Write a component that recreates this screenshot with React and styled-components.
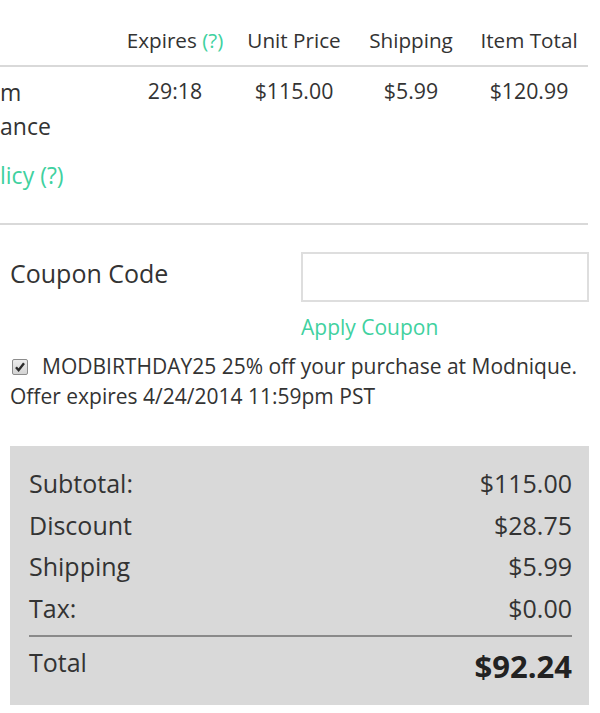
import React from "react";
import styled, { createGlobalStyle } from "styled-components";

const Global = createGlobalStyle`
  html, body { margin: 0; padding: 0; background: #fff; }
  body { font-family: "Open Sans", "Liberation Sans", sans-serif; color: #333; overflow: hidden; }
`;

const Page = styled.div`
  width: 600px;
  display: flex;
  flex-direction: column;
`;

const Cart = styled.div`
  width: 588px;
`;

const Grid = styled.div`
  display: grid;
  grid-template-columns: 120px 110px 128px 106px 130px;
  align-items: start;
`;

const HeadRow = styled(Grid)`
  padding: 27px 0 12px;
  border-bottom: 2px solid #d9d9d9;
`;

const HeadCell = styled.div`
  font-size: 20.7px;
  line-height: 26px;
  text-align: center;
  white-space: nowrap;
  color: #333;
`;

const BodyRow = styled(Grid)`
  height: 156px;
  border-bottom: 2px solid #d9d9d9;
`;

const ProductCell = styled.div`
  padding-top: 8px;
  font-size: 23px;
  line-height: 34px;
  display: flex;
  flex-direction: column;
`;

const Link = styled.span`
  color: #3fd1a0;
  margin-top: ${(p) => p.$gap || 0}px;
`;

const ValueCell = styled.div`
  padding-top: 11px;
  font-size: 21.3px;
  line-height: 26px;
  text-align: center;
  white-space: nowrap;
`;

const CouponRow = styled.div`
  display: grid;
  grid-template-columns: 291px 288px;
  padding: 27px 0 0 10px;
  align-items: start;
`;

const CouponLabel = styled.div`
  font-size: 25px;
  line-height: 42px;
  color: #333;
`;

const CouponInput = styled.input`
  box-sizing: border-box;
  width: 288px;
  height: 50px;
  border: 2px solid #dedede;
  background: #fff;
  margin: 0;
`;

const ApplyLink = styled.div`
  grid-column: 2;
  font-size: 21px;
  line-height: 30px;
  color: #3fd1a0;
  margin-top: 10px;
`;

const Offer = styled.div`
  padding: 9px 0 0 10px;
  font-size: 21px;
  line-height: 30px;
  color: #333;
  white-space: nowrap;
`;

const Check = styled.span`
  display: inline-block;
  box-sizing: border-box;
  width: 16px;
  height: 16px;
  margin: 0 14px 0 2px;
  vertical-align: -1px;
  border: 1px solid #8c8c8c;
  border-radius: 2px;
  background: linear-gradient(#ececec, #d4d4d4);
  position: relative;
  svg { position: absolute; left: 1px; top: 1px; }
`;

const Summary = styled.div`
  margin: 35px 0 0 10px;
  width: 579px;
  box-sizing: border-box;
  background: #d9d9d9;
  padding: 17px 17px 0 19px;
  height: 259px;
`;

const SumRow = styled.div`
  display: flex;
  justify-content: space-between;
  align-items: baseline;
  font-size: 25px;
  line-height: 41.5px;
  color: #333;
`;

const Divider = styled.div`
  height: 2px;
  background: #8a8a8a;
  margin: 6px 0 4px;
`;

const TotalRow = styled(SumRow)`
  align-items: flex-start;
  line-height: 42px;
`;

const TotalValue = styled.span`
  font-size: 31px;
  font-weight: 700;
  line-height: 42px;
  margin-top: 4px;
  color: #222;
`;

export default function App() {
  return (
    <Page>
      <Global />
      <Cart>
        <HeadRow>
          <HeadCell />
          <HeadCell>
            Expires <Link>(?)</Link>
          </HeadCell>
          <HeadCell>Unit Price</HeadCell>
          <HeadCell>Shipping</HeadCell>
          <HeadCell>Item Total</HeadCell>
        </HeadRow>
        <BodyRow>
          <ProductCell>
            <span>m</span>
            <span>ance</span>
            <Link $gap={15}>licy (?)</Link>
          </ProductCell>
          <ValueCell>29:18</ValueCell>
          <ValueCell>$115.00</ValueCell>
          <ValueCell>$5.99</ValueCell>
          <ValueCell>$120.99</ValueCell>
        </BodyRow>
      </Cart>
      <CouponRow>
        <CouponLabel>Coupon Code</CouponLabel>
        <CouponInput type="text" />
        <ApplyLink>Apply Coupon</ApplyLink>
      </CouponRow>
      <Offer>
        <Check>
          <svg width="12" height="12" viewBox="0 0 12 12">
            <path d="M2 6.2 L4.6 9.2 L10 2.2" fill="none" stroke="#2a2a2a" strokeWidth="2.4" />
          </svg>
        </Check>
        MODBIRTHDAY25 25% off your purchase at Modnique.
        <br />
        Offer expires 4/24/2014 11:59pm PST
      </Offer>
      <Summary>
        <SumRow><span>Subtotal:</span><span>$115.00</span></SumRow>
        <SumRow><span>Discount</span><span>$28.75</span></SumRow>
        <SumRow><span>Shipping</span><span>$5.99</span></SumRow>
        <SumRow><span>Tax:</span><span>$0.00</span></SumRow>
        <Divider />
        <TotalRow><span>Total</span><TotalValue>$92.24</TotalValue></TotalRow>
      </Summary>
    </Page>
  );
}
